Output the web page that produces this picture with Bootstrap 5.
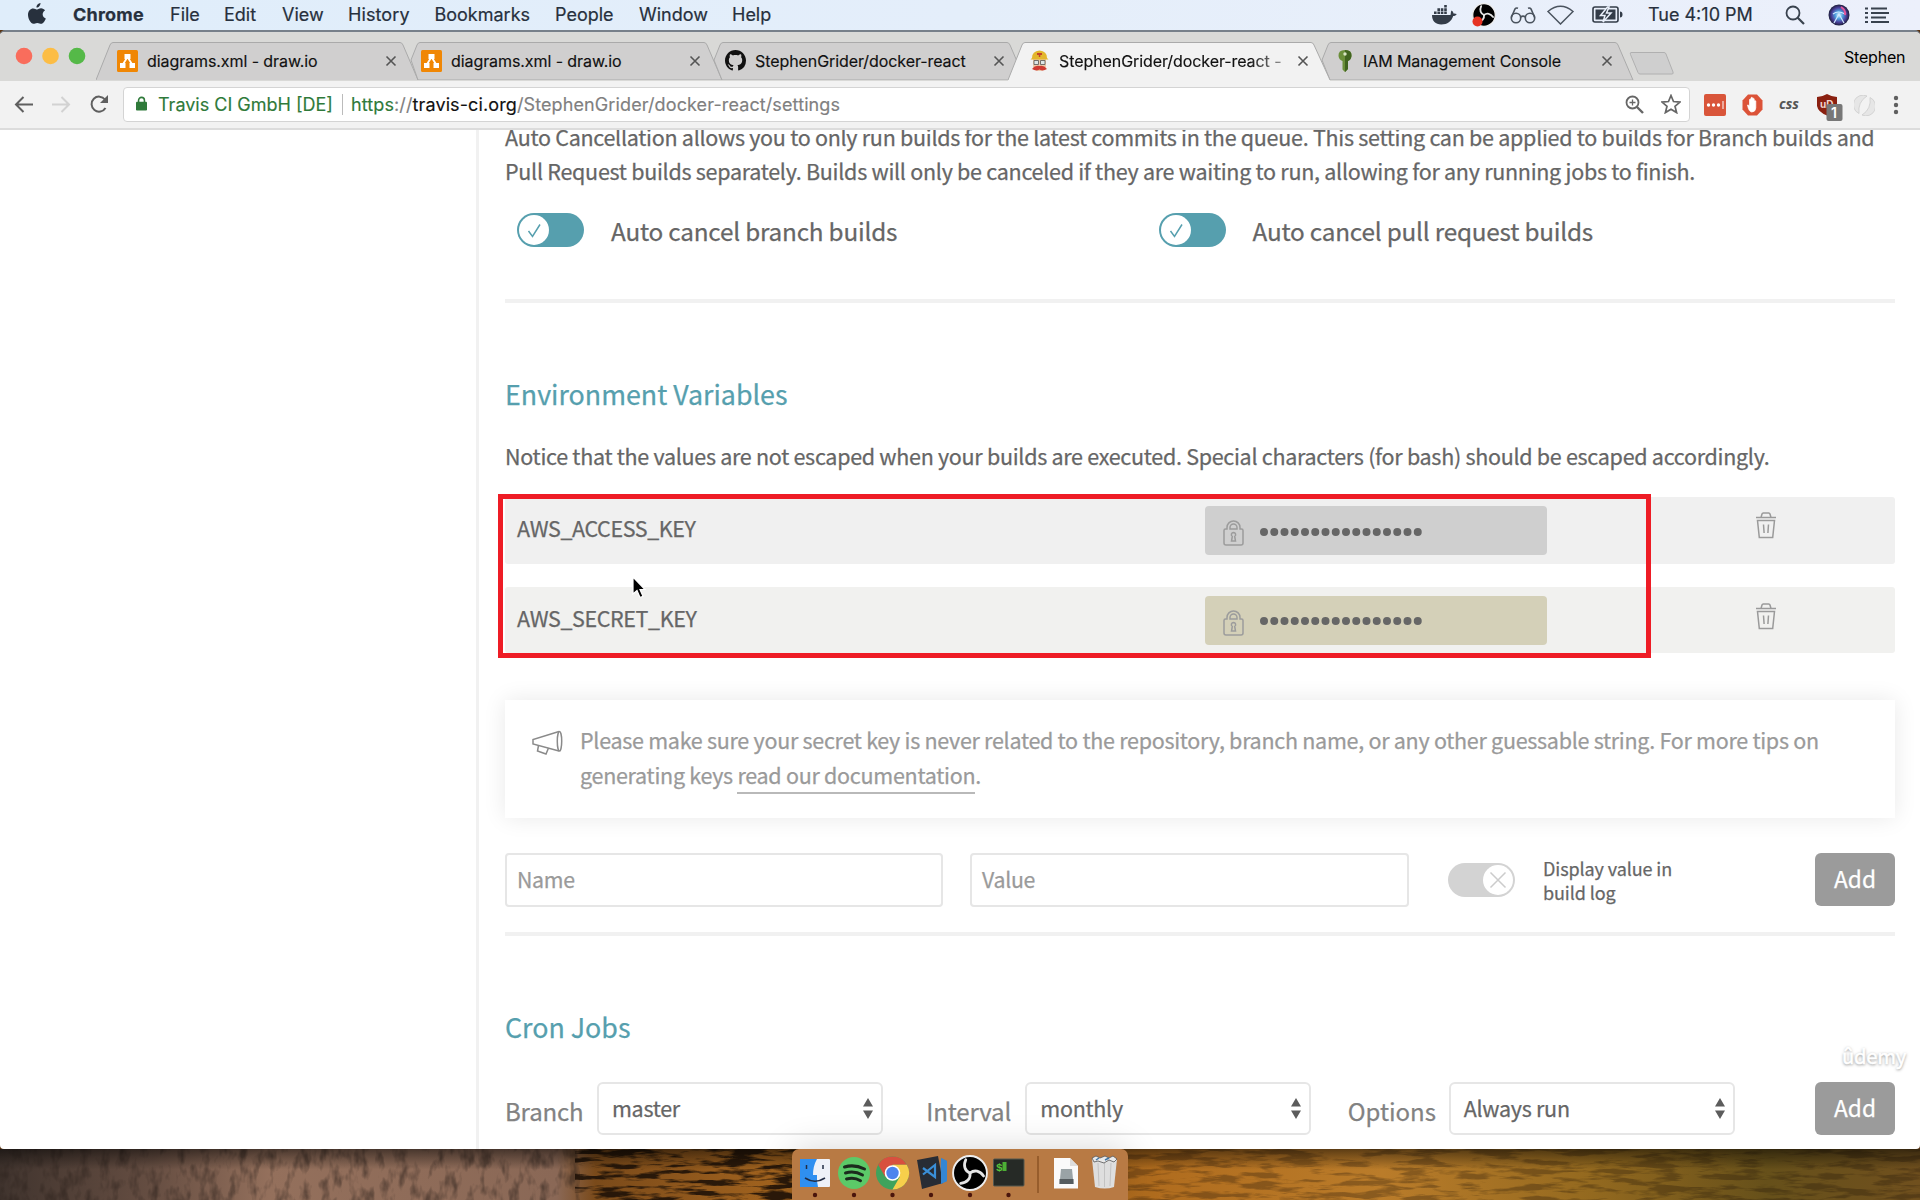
<!DOCTYPE html>
<html lang="en">
<head>
<meta charset="utf-8">
<title>Travis CI - settings</title>
<link href="https://cdn.jsdelivr.net/npm/bootstrap@5.3.0/dist/css/bootstrap.min.css" rel="stylesheet">
<style>
body{width:1920px;height:1200px;overflow:hidden;font-family:"Noto Sans CJK SC","Noto Sans",sans-serif;color:#666;background:#5a3413}
svg{display:block;flex:none}
.ui{font-family:Inter,"Liberation Sans",sans-serif}
.menubar{height:30px;background:linear-gradient(90deg,#dfedfa,#e4eefa 50%,#ecf0fb);color:#27303d;font-size:18px;line-height:30px;position:relative;-webkit-text-stroke:.2px}
.menubar span{position:absolute;left:var(--x);white-space:nowrap}
.menubar svg{position:absolute}
.win{height:1119px;background:#fff;border-top:2px solid #77808a;border-radius:5px 5px 4px 4px;overflow:hidden}
.strip{height:49px;background:#d9d9d7;padding-left:96px}
.tabx{width:322px;height:38px;margin:10px -18px 0 0;position:relative;flex:none;font-size:16px;line-height:38px;color:#111;letter-spacing:-.08px;-webkit-text-stroke:.15px}
.tabx>.shape{position:absolute;left:0;top:0}
.tabx>.ico{position:absolute;left:21px;top:8px}
.tabx>.ttl{position:absolute;left:51px;top:0;white-space:nowrap}
.tabx>.cls{position:absolute;left:289px;top:13px}
.fade-end{-webkit-mask-image:linear-gradient(90deg,#000 190px,rgba(0,0,0,.45) 222px);width:224px}
.bar{height:49px;background:#f2f2f2;border-bottom:2px solid #dcdcdc;position:relative}
.omni{position:absolute;left:123px;top:6px;width:1567px;height:35px;background:#fff;border:1px solid #d4d4d4;border-radius:4px;font-size:18px;line-height:33px;white-space:nowrap;-webkit-text-stroke:.15px}
.bar>svg,.omni>svg{position:absolute}
.omni span.t{position:absolute;top:0}
.side{width:479px;border-right:3px solid #f1f1f1;flex:none}
.main-col{width:1390px;margin-left:26px;flex:none;letter-spacing:-.28px;-webkit-text-stroke:.25px}
.copy{font-size:21.5px;line-height:34px;white-space:nowrap}
.tog{width:67px;height:34px;border-radius:17px;background:#569fae;padding:2px;flex:none}
.tog.off{background:#d3d3d3}
.lbl{font-size:24.3px;line-height:36px;white-space:nowrap;letter-spacing:-.2px}
.rule{height:4px;background:#f1f1f1}
.ttl2{font-size:26.8px;line-height:40px;color:#569fae;font-weight:400;margin:0;white-space:nowrap;letter-spacing:0}
.envrow{background:#f0f0f0;border-radius:3px;padding-left:12px;font-size:21.5px}
.envrow .nm{width:688px;line-height:54px;padding-top:4px;letter-spacing:-.4px}
.val{width:342px;height:49px;margin-top:9px;border-radius:4px;background:#cfcfcf;padding:14px 0 0 18px}
.alt{background:#f1f1ef}.alt .val{background:#d4d0b8}
.tip{height:118px;background:#fff;box-shadow:0 0 22px rgba(0,0,0,.09);color:#9a9a9a;padding:22px 0 0 27px;margin-top:47px}
.tip .copy{line-height:35px}
.tip a{color:inherit;text-decoration:none;border-bottom:2px solid #b9b9b9;padding-bottom:1px;display:inline-block;line-height:33px}
.inp{width:438px;height:54px;border:2px solid #e6e6e6;border-radius:4px;color:#9a9a9a;font-size:21.3px;line-height:47px;padding-left:10px}
.addb{width:80px;height:53px;background:#9b9b9b;border-radius:6px;color:#fff;font-size:22.7px;line-height:50px;text-align:center;padding:0 0 1px;border:0;letter-spacing:0}
.sel{width:286px;height:53px;border:2px solid #e6e6e6;border-radius:6px;font-size:21.5px;line-height:48px;padding:0 8px 0 13px}
.sel span{margin-top:-1px}
.grp{font-size:24px;line-height:57px;color:#828282;letter-spacing:-.15px}
.redbox{position:absolute;left:498px;top:494px;width:1153px;height:164px;border:5px solid #ee1c25}
.desk{position:relative;height:51px}
.dock{position:absolute;left:792px;top:1149px;width:336px;height:51px;background:#b87a44;border-radius:7px 7px 0 0;box-shadow:0 0 36px rgba(0,0,0,.16)}
.wmark{position:absolute;left:1842px;top:1041px;color:#fff;font-size:20.3px;line-height:28px;letter-spacing:-.3px;-webkit-text-stroke:.5px;text-shadow:0 1px 3px rgba(0,0,0,.5)}
</style>
</head>
<body>
<svg width="0" height="0" class="position-absolute">
<defs>
<symbol id="x" viewBox="0 0 12 12"><path d="M1.5 1.5l9 9M10.5 1.5l-9 9" stroke="#555" stroke-width="1.6"/></symbol>
<symbol id="dio" viewBox="0 0 21 22"><rect width="21" height="22" rx="1.5" fill="#f08705"/><path d="M10.5 7L5.500 15M10.500 7l5 8" stroke="#fff" stroke-width="1.8"/><path d="M7.500 4h6v5h-6zM3 13h5.500v5H3zM12.500 13H18v5h-5.500z" fill="#fff"/></symbol>
<symbol id="obs" viewBox="-17 -17 34 34"><circle r="16" fill="#000" stroke="#eee" stroke-width="1.800"/><g fill="none" stroke="#e6e6e6" stroke-width="2.600" stroke-linecap="round"><path d="M0 0C-5-2-6.500-7-4-12.500"/><path d="M0 0C-5-2-6.500-7-4-12.500" transform="rotate(120)"/><path d="M0 0C-5-2-6.500-7-4-12.500" transform="rotate(240)"/></g></symbol>
<symbol id="lk" viewBox="0 0 21 26"><path d="M1 10.500q0-1.500 1.500-1.500h1.500V7.500a6.500 6.500 0 0 1 13 0V9h1.500q1.500 0 1.500 1.500V23q0 2-2 2H3q-2 0-2-2zM7 9V7.500a3.500 3.500 0 0 1 7 0V9zM10.500 12.500a2.200 2.200 0 0 1 1.200 4l.8 4.500h-4l.8-4.500a2.200 2.200 0 0 1 1.200-4z" fill="none" stroke="#9c9c9c" stroke-width="1.500"/></symbol>
<symbol id="bin" viewBox="0 0 20 27"><g fill="none" stroke="#9a9a9a" stroke-width="1.500"><path d="M0 5.500h20M5 5.500l1-3.500q.3-1 1.300-1h5.400q1 0 1.300 1l1 3.500M1.500 8.500h17l-1.800 17H3.300z"/><path d="M7.500 12.500l.6 8.500M12.500 12.500l-.6 8.500"/></g></symbol>
<symbol id="ud" viewBox="0 0 10 21"><path d="M5 0l5 8.500H0zM5 21l5-8.500H0z" fill="#5c5c5c"/></symbol>
<symbol id="ok" viewBox="0 0 30 30"><circle cx="15" cy="15" r="15" fill="#fff"/><path d="M9.500 16l4 5.500L21 9.500" fill="none" stroke="#569fae" stroke-width="1.500"/></symbol>
</defs></svg>

<div class="menubar ui">
<svg style="left:28px;top:3px" width="18" height="21" viewBox="0 0 18 21"><path d="M12.500 0c.2 2-1.700 4.700-4 4.600C8.200 2.500 10.300.3 12.500 0zM13 5.300c1.700 0 3.200 1 4 2.200-3.500 2-2.900 6.600.8 8-.8 2.300-2.600 5.200-4.500 5.300-1.500 0-2-.9-4-.9s-2.500.9-3.900.9C2.900 20.800 0 15.800 0 11.700c0-4 2.600-6.300 5.200-6.300 1.600 0 2.900 1.100 4 1.100 1 0 2.300-1.200 3.800-1.200z" fill="#27303d"/></svg>
<span class="fw-bold" style="--x:73px;letter-spacing:.2px">Chrome</span><span style="--x:170px">File</span><span style="--x:224px">Edit</span><span style="--x:282px">View</span><span style="--x:348px;letter-spacing:.1px">History</span><span style="--x:434.500px">Bookmarks</span><span style="--x:555px">People</span><span style="--x:639px">Window</span><span style="--x:732px">Help</span>
<svg style="left:1432px;top:5px" width="25" height="20" viewBox="0 0 25 20"><path d="M0 10h18.500c.5-2 .2-3 1-4.500 1.500.8 1.800 1.800 2 3 1-.2 2.200 0 3.200.5-.7 1.500-2 2-3.500 2-2 5.500-5.500 8.500-12 8.500C3.500 19.500 0 16 0 10z" fill="#333c48"/><path d="M2 6.500h2.600v2.600H2zM5.400 6.500H8v2.600H5.400zM8.800 6.500h2.600v2.600H8.800zM12.200 6.500h2.600v2.600h-2.600zM5.400 3.300H8v2.600H5.400zM8.800 3.300h2.600v2.600H8.800zM12.200 3.300h2.600v2.600h-2.600zM12.200 0h2.600v2.600h-2.600z" fill="#333c48"/></svg>
<svg style="left:1472px;top:3px" width="24" height="24"><use href="#obs"/><circle cx="5.500" cy="18.500" r="5" fill="#e63323"/></svg>
<svg style="left:1510px;top:7px" width="26" height="17" viewBox="0 0 26 17"><g fill="none" stroke="#4a535e" stroke-width="1.600"><circle cx="6" cy="11" r="4.700"/><circle cx="20" cy="11" r="4.700"/><path d="M10.700 10q2.300-1.800 4.600 0M1.300 10.500L5 2q1-1.500 3-.8M24.700 10.500L21 2q-1-1.500-3-.8"/></g></svg>
<svg style="left:1547px;top:5px" width="27" height="20" viewBox="0 0 27 20"><path d="M1 6.500Q13.500-4 26 6.500L13.500 19z" fill="none" stroke="#4a535e" stroke-width="1.500"/></svg>
<svg style="left:1592px;top:6px" width="31" height="17" viewBox="0 0 31 17"><rect x="1" y="1" width="25" height="15" rx="2" fill="none" stroke="#333c48" stroke-width="1.600"/><path d="M3.500 3.500h20v10h-20zM28 5.500q2.500 0 2.500 3t-2.500 3z" fill="#333c48"/><path d="M15.500 1L8.500 9.500h4.500L11 16l8-9h-4.500L17 1z" fill="#333c48" stroke="#eaf0fb" stroke-width="1.500"/></svg>
<span style="--x:1648px">Tue 4:10 PM</span>
<svg style="left:1785px;top:5px" width="20" height="20"><circle cx="8" cy="8" r="6.500" fill="none" stroke="#39424e" stroke-width="1.800"/><path d="M12.500 12.500l6.500 6.500" stroke="#39424e" stroke-width="2.200"/></svg>
<svg style="left:1828px;top:4px" width="22" height="22" viewBox="0 0 22 22"><defs><radialGradient id="si"><stop offset="0" stop-color="#e8f4ff"/><stop offset=".35" stop-color="#4fa3e0"/><stop offset=".7" stop-color="#4a3f9a"/><stop offset="1" stop-color="#1c1d3a"/></radialGradient></defs><circle cx="11" cy="11" r="10.500" fill="url(#si)"/><path d="M6 19l5-9 5 9M5 10q5-4 12 0" stroke="#cfe9ff" fill="none" stroke-width="1.200"/><path d="M13 3q5 3 4 8" stroke="#e0569b" fill="none" stroke-width="2"/></svg>
<svg style="left:1865px;top:7px" width="25" height="16"><path d="M0 1.500h3M0 6h3M0 10.500h3M0 15h3M6 1.500h16M6 6h18M6 10.500h15M6 15h18" stroke="#39424e" stroke-width="2"/></svg>
</div>

<div class="win">
<div class="strip d-flex ui position-relative">
<svg class="position-absolute" style="left:15px;top:15px" width="72" height="18"><circle cx="9" cy="9" r="8.300" fill="#f96d5c"/><circle cx="35.500" cy="9" r="8.300" fill="#fcbd45"/><circle cx="62" cy="9" r="8.300" fill="#55b948"/></svg>
<div class="tabx"><svg class="shape" width="322" height="38"><path d="M0 38L14 3q1-2.500 3-2.500h287q2 0 3 2.500l15 35" fill="#d0cfcf" stroke="#aaa"/></svg><svg class="ico" width="21" height="22"><use href="#dio"/></svg><span class="ttl">diagrams.xml - draw.io</span><svg class="cls" width="12" height="12"><use href="#x"/></svg></div>
<div class="tabx"><svg class="shape" width="322" height="38"><path d="M11 18L17 3q1-2.500 3-2.500h284q2 0 3 2.500l15 35H18z" fill="#d0cfcf" stroke="#aaa"/></svg><svg class="ico" width="21" height="22"><use href="#dio"/></svg><span class="ttl">diagrams.xml - draw.io</span><svg class="cls" width="12" height="12"><use href="#x"/></svg></div>
<div class="tabx"><svg class="shape" width="322" height="38"><path d="M10 18L16 3q1-2.500 3-2.500h284q2 0 3 2.500l15 35H18z" fill="#d0cfcf" stroke="#aaa"/></svg><svg class="ico" width="21" height="21" viewBox="0 0 16 16"><path fill="#111" d="M8 0C3.580 0 0 3.580 0 8c0 3.540 2.290 6.530 5.470 7.590.4.070.55-.17.55-.38 0-.19-.01-.82-.01-1.490-2.010.37-2.530-.49-2.690-.94-.09-.23-.48-.94-.82-1.130-.28-.15-.68-.52-.01-.53.63-.01 1.080.58 1.230.82.72 1.210 1.870.87 2.330.66.070-.52.28-.87.51-1.070-1.780-.2-3.640-.89-3.640-3.950 0-.87.31-1.590.82-2.150-.08-.2-.36-1.020.08-2.120 0 0 .67-.21 2.200.82.640-.18 1.320-.27 2-.27s1.360.09 2 .27c1.530-1.040 2.200-.82 2.200-.82.440 1.100.16 1.920.08 2.120.51.56.82 1.270.82 2.150 0 3.070-1.870 3.750-3.650 3.950.29.25.54.73.54 1.480 0 1.070-.01 1.930-.01 2.200 0 .21.15.46.55.38A8.010 8.010 0 0 0 16 8c0-4.420-3.580-8-8-8z"/></svg><span class="ttl">StephenGrider/docker-react</span><svg class="cls" width="12" height="12"><use href="#x"/></svg></div>
<div class="tabx z-1"><svg class="shape" width="322" height="39"><path d="M0 38L14 3q1-2.500 3-2.500h286q2 0 3 2.500l16 35v1H0" fill="#f2f2f2" stroke="#aaa"/><path d="M0 38.500h322" stroke="#f2f2f2"/></svg><svg class="ico" style="left:22px" width="19" height="22" viewBox="0 0 19 22"><path d="M3 8h13v9q-1 4-6.500 4T3 17z" fill="#ecc9a8"/><path d="M2 8Q2 1 9.500.500 17 1 17 8l1.500 1.500H.5z" fill="#e3b62c"/><path d="M7 3h5v2H7zM8.800 3h1.500v4H8.800z" fill="#c3422b"/><path d="M4 10.500h4.500v4H4zM10.500 10.500H15v4h-4.500z" fill="#dde6e6" stroke="#555" stroke-width=".8"/><path d="M2 19q3-4 7.500-3 4.500-1 7.500 3-4 2.500-7.500.5Q6 21.500 2 19z" fill="#cf3b33"/></svg><span class="ttl fade-end">StephenGrider/docker-react -</span><svg class="cls" width="12" height="12"><use href="#x"/></svg></div>
<div class="tabx"><svg class="shape" width="322" height="38"><path d="M10 18L16 3q1-2.500 3-2.500h284q2 0 3 2.500l15 35H18z" fill="#d0cfcf" stroke="#aaa"/></svg><svg class="ico" style="left:26px" width="14" height="22" viewBox="0 0 14 22"><path d="M7 0q7 0 6.500 6-.5 4-3.500 5v8l-3 3-2.500-2.500V11Q1 10 .5 6 0 0 7 0z" fill="#6b8f3a"/><path d="M7 0v22l3-3v-8q3-1 3.500-5Q14 0 7 0z" fill="#41641f"/><circle cx="7" cy="4" r="1.700" fill="#d9e5c4"/></svg><span class="ttl">IAM Management Console</span><svg class="cls" width="12" height="12"><use href="#x"/></svg></div>
<svg class="position-absolute" style="left:1629px;top:20px" width="46" height="23"><path d="M2 .5h33q1.500 0 2 1.500l7 18q.7 2-1 2H11q-1.500 0-2-1.500L1.500 2.500Q.7.500 2 .5z" fill="#cfcfcf" stroke="#b0b0b0"/></svg>
<span class="position-absolute text-black" style="left:1844px;top:9px;font-size:16px;line-height:32px;letter-spacing:-.2px">Stephen</span>
</div>
<div class="bar ui">
<svg style="left:14px;top:15px" width="20" height="17"><path d="M19 8.500H2M9.500 1L2 8.500 9.500 16" fill="none" stroke="#5f5f5f" stroke-width="2"/></svg>
<svg style="left:52px;top:15px" width="19" height="17"><path d="M0 8.500h16.500M9.500 1L17 8.500 9.500 16" fill="none" stroke="#d2d2d2" stroke-width="2"/></svg>
<svg style="left:90px;top:14px" width="19" height="19"><path d="M15.500 13A7.500 7.500 0 1 1 15 4.500" fill="none" stroke="#5f5f5f" stroke-width="2"/><path d="M18 0v8h-8z" fill="#5f5f5f"/></svg>
<div class="omni">
<svg style="left:12px;top:8px" width="11" height="15" viewBox="0 0 12 16"><rect y="6" width="12" height="9.500" rx="1" fill="#2f7a3a"/><path d="M2.800 7V4.500a3.200 3.200 0 0 1 6.400 0V7" fill="none" stroke="#2f7a3a" stroke-width="1.700"/></svg>
<span class="t" style="left:34px;color:#2f7a3a">Travis CI GmbH [DE]</span><span class="t" style="left:218px;top:6px;width:1px;height:21px;background:#bbb"></span>
<span class="t" style="left:227px;color:#808080;letter-spacing:.11px"><span style="color:#2f7a3a">https</span>://<span style="color:#111">travis-ci.org</span>/StephenGrider/docker-react/settings</span>
<svg style="left:1501px;top:7px" width="19" height="19"><circle cx="7.500" cy="7.500" r="6" fill="none" stroke="#666" stroke-width="1.800"/><path d="M12 12l6 6" stroke="#666" stroke-width="2.400"/><path d="M4.500 7.500h6M7.500 4.500v6" stroke="#666" stroke-width="1.300"/></svg>
<svg style="left:1537px;top:6px" width="20" height="20" viewBox="0 0 20 20"><path d="M10 1.500l2.500 6 6.500.6-5 4.200 1.600 6.300L10 15.200l-5.600 3.400L6 12.300 1 8.100l6.500-.6z" fill="none" stroke="#666" stroke-width="1.700"/></svg>
</div>
<svg style="left:1704px;top:13px" width="22" height="22"><rect width="22" height="22" rx="2" fill="#d9553a"/><g fill="#fff"><circle cx="4.500" cy="11" r="1.700"/><circle cx="9.500" cy="11" r="1.700"/><circle cx="14.500" cy="11" r="1.700"/></g><path d="M19 7v8" stroke="#fff" stroke-width="1"/></svg>
<svg style="left:1742px;top:13px" width="21" height="22" viewBox="0 0 21 22"><path d="M6 .5h9l5.500 6v9l-5.500 6H6l-5.500-6v-9z" fill="#dc5338"/><path d="M5.500 11q1.200-.5 2 1.500V5.500q.7-1 1.500 0V10V3.800q.8-1 1.600 0V10V4.800q.8-1 1.600 0V11V7q.8-1 1.600 0v7q-.4 4-4 4-3 0-4.300-7z" fill="#fff" stroke="#fff" stroke-width=".7"/></svg>
<svg style="left:1779px;top:11px" width="22" height="24"><text x="0" y="16.500" font-family="Open Sans" font-style="italic" font-weight="700" font-size="15" textLength="20" lengthAdjust="spacingAndGlyphs" fill="#555">css</text></svg>
<svg style="left:1816px;top:13px" width="28" height="28"><path d="M1 3q5 0 10-3 5 3 10 3v9q-1 6-10 9.500Q2 18 1 12z" fill="#8a2010"/><text x="4" y="14" font-size="10" font-weight="700" fill="#f0d5cf">uD</text><rect x="10.500" y="10" width="16" height="17" rx="2" fill="#777"/><text x="15" y="23.500" font-size="14" font-weight="600" fill="#fff">1</text></svg>
<svg style="left:1854px;top:14px" width="21" height="21"><g fill="#e6e6e6" stroke="#cdcdcd" stroke-width=".8"><path d="M13 1A9 9 0 0 0 5 18.500Q3.500 7 13 1z"/><path d="M8 20A9 9 0 0 0 16 2.500Q17.500 14 8 20z"/></g></svg>
<svg style="left:1893px;top:14px" width="6" height="20"><circle cx="3" cy="3" r="2.200" fill="#5f5f5f"/><circle cx="3" cy="10" r="2.200" fill="#5f5f5f"/><circle cx="3" cy="17" r="2.200" fill="#5f5f5f"/></svg>
</div>

<div class="d-flex" style="height:1020px">
<div class="side"></div>
<div class="main-col">
<div class="copy" style="margin-top:-10px">Auto Cancellation allows you to only run builds for the latest commits in the queue. This setting can be applied to builds for Branch builds and<br>Pull Request builds separately. Builds will only be canceled if they are waiting to run, allowing for any running jobs to finish.</div>
<div class="d-flex" style="padding:25px 0 50px 12px">
<div class="d-flex" style="width:641.500px"><div class="tog"><svg width="30" height="30"><use href="#ok"/></svg></div><span class="lbl" style="margin-left:27px">Auto cancel branch builds</span></div>
<div class="d-flex"><div class="tog"><svg width="30" height="30"><use href="#ok"/></svg></div><span class="lbl" style="margin-left:27px">Auto cancel pull request builds</span></div>
</div>
<div class="rule"></div>
<h2 class="ttl2" style="margin-top:71px">Environment Variables</h2>
<div class="copy" style="margin:25px 0 24px;letter-spacing:-.29px">Notice that the values are not escaped when your builds are executed. Special characters (for bash) should be escaped accordingly.</div>
<div class="envrow d-flex" style="height:67px"><div class="nm">AWS_ACCESS_KEY</div><div class="val d-flex"><svg width="21" height="26"><use href="#lk"/></svg><svg style="margin:7px 0 0 15px" width="165" height="10"><path d="M5 5h158" stroke="#666" stroke-width="8" stroke-linecap="round" stroke-dasharray="0 10.250"/></svg></div><svg style="margin:15px 0 0 209px" width="20" height="27"><use href="#bin"/></svg></div>
<div class="envrow alt d-flex" style="height:66px;margin-top:23px"><div class="nm">AWS_SECRET_KEY</div><div class="val d-flex"><svg width="21" height="26"><use href="#lk"/></svg><svg style="margin:6px 0 0 15px" width="165" height="10"><path d="M5 5h158" stroke="#666" stroke-width="8" stroke-linecap="round" stroke-dasharray="0 10.250"/></svg></div><svg style="margin:16px 0 0 209px" width="20" height="27"><use href="#bin"/></svg></div>
<div class="tip d-flex"><svg style="margin-top:8px" width="31" height="26" viewBox="0 0 31 26"><g fill="none" stroke="#8a8a8a" stroke-width="1.500"><path d="M27 1.500L1 9.500v4.500l26 7"/><ellipse cx="27.500" cy="11.300" rx="2.200" ry="9.800"/><path d="M6.500 15.500L5.500 21l8.500 3 2.500-6"/></g></svg>
<div class="copy" style="margin-left:17px">Please make sure your secret key is never related to the repository, branch name, or any other guessable string. For more tips on<br>generating keys <a href="#">read our documentation</a>.</div></div>
<div class="d-flex" style="margin-top:35px"><div class="inp">Name</div><div class="inp" style="margin-left:27px;width:439px">Value</div>
<div class="tog off d-flex justify-content-end" style="margin:10px 0 0 39px"><svg width="30" height="30"><circle cx="15" cy="15" r="15" fill="#fff"/><path d="M7.500 7.500l15 15M22.500 7.500l-15 15" stroke="#ccc" stroke-width="1.500"/></svg></div>
<div style="margin:3px 0 0 28px;width:272px;font-size:18px;line-height:24px;letter-spacing:-.1px">Display value in<br>build log</div><button class="addb">Add</button></div>
<div class="rule" style="margin-top:25px"></div>
<h2 class="ttl2" style="margin-top:71px">Cron Jobs</h2>
<div class="d-flex" style="margin-top:35px"><div class="grp" style="width:92px">Branch</div><div class="sel d-flex justify-content-between align-items-center"><span>master</span><svg width="10" height="21"><use href="#ud"/></svg></div>
<div class="grp" style="width:99px;margin-left:43.500px">Interval</div><div class="sel d-flex justify-content-between align-items-center"><span>monthly</span><svg width="10" height="21"><use href="#ud"/></svg></div>
<div class="grp" style="width:101px;margin-left:36.500px;letter-spacing:0">Options</div><div class="sel d-flex justify-content-between align-items-center"><span>Always run</span><svg width="10" height="21"><use href="#ud"/></svg></div><button class="addb" style="margin-left:80.500px">Add</button></div>
</div></div></div>

<div class="desk"><svg width="1920" height="51"><defs>
<linearGradient id="wd"><stop offset="0" stop-color="#40342e"/><stop offset=".08" stop-color="#664e42"/><stop offset=".14" stop-color="#94705c"/><stop offset=".29" stop-color="#8a6856"/><stop offset=".31" stop-color="#7a4a1a"/><stop offset=".4" stop-color="#a0621e"/><stop offset=".6" stop-color="#b06c1e"/><stop offset=".72" stop-color="#ba7c2a"/><stop offset=".83" stop-color="#93691f"/><stop offset=".92" stop-color="#66501a"/><stop offset="1" stop-color="#70501e"/></linearGradient>
<linearGradient id="sh" x2="0" y2="1"><stop offset="0" stop-color="#000" stop-opacity=".5"/><stop offset=".4" stop-color="#000" stop-opacity="0"/></linearGradient>
<filter id="n1" x="0" y="0" width="1" height="1" color-interpolation-filters="sRGB"><feTurbulence type="fractalNoise" baseFrequency=".025 .16" numOctaves="4" seed="4"/><feColorMatrix values="0 0 0 0 .12 0 0 0 0 .07 0 0 0 0 .03 6 0 0 0 -2.800"/></filter>
<filter id="n2" x="0" y="0" width="1" height="1" color-interpolation-filters="sRGB"><feTurbulence type="fractalNoise" baseFrequency=".1 .05" numOctaves="3" seed="9"/><feColorMatrix values="0 0 0 0 .16 0 0 0 0 .12 0 0 0 0 .1 3 0 0 0 -1.400"/></filter></defs>
<rect width="1920" height="51" fill="url(#wd)"/><rect width="580" height="51" filter="url(#n2)" opacity=".5"/><rect x="575" width="225" height="51" filter="url(#n1)" opacity=".9"/><rect x="1120" width="800" height="51" filter="url(#n1)" opacity=".3"/><rect width="1920" height="51" fill="url(#sh)"/></svg></div>

<div class="dock"><svg width="336" height="51" viewBox="792 1149 336 51">
<rect x="800" y="1159" width="30" height="28" rx="1" fill="#eef1f8"/><path d="M800 1159h17q-4 7-4 16h4q-.5 6 1 12h-18z" fill="#2f8ff0"/><path d="M806.500 1165v4M823 1165v4M805 1178q10 6.500 20 0" stroke="#222c44" stroke-width="1.500" fill="none"/>
<circle cx="854" cy="1173" r="16" fill="#5cc968"/><path d="M844.500 1167q10-3 20 2M845.500 1173q9-2.500 17 2M846.500 1179q8-2 14 1.700" stroke="#1b2a1d" stroke-width="3" fill="none" stroke-linecap="round"/>
<circle cx="892.500" cy="1173" r="16.500" fill="#3fa35c"/><path d="M878.200 1164.700A16.500 16.500 0 0 1 906.800 1164.700H892.500L885.300 1177z" fill="#d8503f"/><path d="M906.800 1164.700A16.500 16.500 0 0 1 892.500 1189.500L899.700 1177 892.500 1164.700z" fill="#f7cf4b"/><circle cx="892.500" cy="1173" r="7.800" fill="#fff"/><circle cx="892.500" cy="1173" r="6.200" fill="#4c84ee"/>
<path d="M941 1158l6 3v20l-7 3-12-2 12-2z" fill="#3486d2"/><path d="M917 1160l21-4 5 27-21 6z" fill="#282c34"/><path d="M941 1158l6 3v20l-6 3z" fill="#3486d2"/><path d="M923 1168l12 9v-12l-12 9.500" stroke="#3a8fd8" stroke-width="2.200" fill="none"/>
<use href="#obs" x="952" y="1155" width="36" height="36"/>
<rect x="993.500" y="1159" width="30.500" height="27" rx="1" fill="#262a26" stroke="#55584f"/><text x="996" y="1171" font-family="Liberation Mono" font-weight="700" font-size="11" fill="#58c43c">$</text><rect x="1002.500" y="1162" width="4" height="9" fill="#4caf35"/>
<path d="M1038 1156v37" stroke="#8c5524" stroke-width="1.500"/>
<path d="M1054 1158h16l8 8v22.500h-24z" fill="#fafafa"/><path d="M1070 1158v8h8" fill="#ddd"/><path d="M1061 1169h11l1.500 15h-14z" fill="#9aa3a6"/><path d="M1059.500 1179h14v5h-14z" fill="#555c5f"/>
<path d="M1092 1159h25l-3 28q-9 3-19 0z" fill="#dedede"/><path d="M1098 1163l1 23M1104.500 1163v24M1111 1163l-1 23" stroke="#c3c3c3"/><path d="M1092 1158l4-2 4 2 5-2 4 2 4-2 4 3-3 3-5-2-5 3-6-2-4 1z" fill="#e9e9e9" stroke="#555" stroke-width=".8"/><path d="M1096 1160l3-2M1105 1160l4-2" stroke="#3f78a8" stroke-width="1.500"/>
<g fill="#4a150c"><circle cx="815" cy="1195" r="2.200"/><circle cx="854" cy="1195" r="2.200"/><circle cx="892.500" cy="1195" r="2.200"/><circle cx="931" cy="1195" r="2.200"/><circle cx="970" cy="1195" r="2.200"/><circle cx="1008.500" cy="1195" r="2.200"/></g>
</svg></div>
<div class="redbox"></div>
<svg class="position-absolute" style="left:631px;top:575px" width="16" height="25"><path d="M2 2v17l4-3.500 3 7 3-1.300-3-6.700h5z" fill="#000" stroke="#fff" stroke-width="1.200"/></svg>
<div class="wmark">ûdemy</div>
<script src="https://cdn.jsdelivr.net/npm/bootstrap@5.3.0/dist/js/bootstrap.bundle.min.js"></script>
</body>
</html>
